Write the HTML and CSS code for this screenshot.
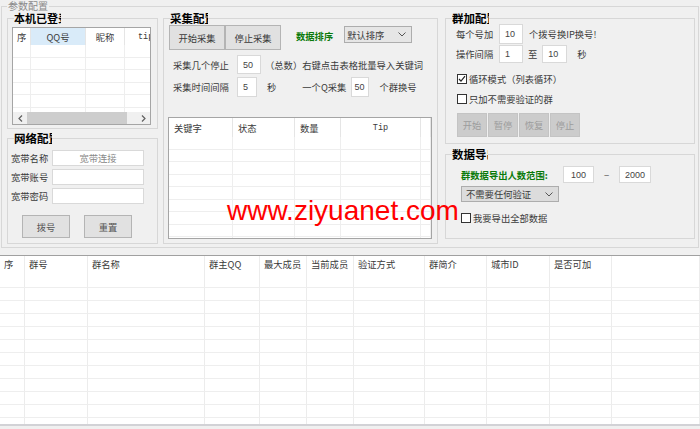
FILE: index.html
```html
<!DOCTYPE html>
<html lang="zh-CN">
<head>
<meta charset="utf-8">
<title>参数配置</title>
<link rel="stylesheet" href="styles.css">
</head>
<body>
<div class="outer">
  <div class="outer-title">参数配置</div>
  <div class="outer-body">
    <div class="col col1">
      <div class="group g1">
        <div class="gtitle w47">本机已登录</div>
        <div class="lv1">
          <div class="lv-body">
            <table class="lt lt1">
              <colgroup><col class="k18"><col class="k55"><col class="k39"><col class="k40"></colgroup>
              <thead><tr><th class="pl4">序</th><th class="hot ctr">QQ号</th><th class="ctr">昵称</th><th class="mono pl13">tip</th></tr></thead>
              <tbody>
                <tr><td></td><td></td><td></td><td></td></tr>
                <tr><td></td><td></td><td></td><td></td></tr>
                <tr><td></td><td></td><td></td><td></td></tr>
                <tr><td></td><td></td><td></td><td></td></tr>
                <tr><td></td><td></td><td></td><td></td></tr>
                <tr><td></td><td></td><td></td><td></td></tr>
              </tbody>
            </table>
          </div>
          <div class="scrollbar">
            <span class="sb-arrow"><svg width="5" height="7" viewBox="0 0 5 7"><polyline points="4,0.5 1,3.5 4,6.5" fill="none" stroke="#606060" stroke-width="1.2"/></svg></span>
            <span class="sb-thumb"></span>
            <span class="sb-track"></span>
            <span class="sb-arrow"><svg width="5" height="7" viewBox="0 0 5 7"><polyline points="1,0.5 4,3.5 1,6.5" fill="none" stroke="#606060" stroke-width="1.2"/></svg></span>
          </div>
        </div>
      </div>
      <div class="group g2">
        <div class="gtitle w38">网络配置</div>
        <div class="form2">
          <div class="frow"><span class="lbl2">宽带名称</span><input class="in in2 ctr grey" value="宽带连接"></div>
          <div class="frow"><span class="lbl2">宽带账号</span><input class="in in2" value=""></div>
          <div class="frow"><span class="lbl2">宽带密码</span><input class="in in2" value=""></div>
        </div>
        <div class="btnrow2"><button class="btn b48">拨号</button><button class="btn b48">重置</button></div>
      </div>
    </div>

    <div class="col col2">
      <div class="group g3">
        <div class="gtitle w38">采集配置</div>
        <div class="row3a">
          <button class="btn b56">开始采集</button><button class="btn b56">停止采集</button>
          <span class="green sort">数据排序</span>
          <div class="select s68"><span>默认排序</span><svg width="8" height="5" viewBox="0 0 8 5"><polyline points="0.5,0.5 4,4 7.5,0.5" fill="none" stroke="#555" stroke-width="1"/></svg></div>
        </div>
        <div class="row3b"><span class="lbl3">采集几个停止</span><input class="in n24 h19" value="50"><span class="ml4">（总数）右键点击表格批量导入关键词</span></div>
        <div class="row3c"><span class="lbl3">采集时间间隔</span><input class="in n20 h20" value="5"><span class="ml10">秒</span><span class="ml26">一个Q采集</span><input class="in n18 h20 ml5" value="50"><span class="ml10">个群换号</span></div>
        <div class="lv2">
          <table class="lt lt2">
            <colgroup><col class="k64"><col class="k62"><col class="k46"><col class="k80"><col class="k10"></colgroup>
            <thead><tr><th class="pl5">关键字</th><th class="pl5">状态</th><th class="pl5">数量</th><th class="mono ctr">Tip</th><th></th></tr></thead>
            <tbody>
              <tr><td></td><td></td><td></td><td></td><td></td></tr>
              <tr><td></td><td></td><td></td><td></td><td></td></tr>
              <tr><td></td><td></td><td></td><td></td><td></td></tr>
              <tr><td></td><td></td><td></td><td></td><td></td></tr>
              <tr><td></td><td></td><td></td><td></td><td></td></tr>
              <tr><td></td><td></td><td></td><td></td><td></td></tr>
              <tr><td></td><td></td><td></td><td></td><td></td></tr>
              <tr><td></td><td></td><td></td><td></td><td></td></tr>
              <tr><td></td><td></td><td></td><td></td><td></td></tr>
            </tbody>
          </table>
        </div>
      </div>
    </div>

    <div class="col col3">
      <div class="group g4">
        <div class="gtitle w37">群加配置</div>
        <div class="row4a"><span class="lbl4">每个号加</span><input class="in n24 h20" value="10"><span class="ml6">个拨号换IP换号!</span></div>
        <div class="row4b"><span class="lbl4">操作间隔</span><input class="in n24 h18" value="1"><span class="ml5">至</span><input class="in n25 h18 ml5" value="10"><span class="ml10">秒</span></div>
        <div class="cbrow cb1"><span class="cb"><svg width="8" height="8" viewBox="0 0 8 8"><polyline points="1,4 3,6.2 7,1.2" fill="none" stroke="#222" stroke-width="1.2"/></svg></span><span>循环模式（列表循环）</span></div>
        <div class="cbrow cb2"><span class="cb"></span><span>只加不需要验证的群</span></div>
        <div class="btnrow4"><button class="btn dis">开始</button><button class="btn dis">暂停</button><button class="btn dis">恢复</button><button class="btn dis">停止</button></div>
      </div>
      <div class="group g5">
        <div class="gtitle w36">数据导出</div>
        <div class="row5a"><span class="green lbl5">群数据导出人数范围:</span><input class="in n31 h17" value="100"><span class="dash">−</span><input class="in n32 h17" value="2000"></div>
        <div class="select s98"><span>不需要任何验证</span><svg width="8" height="5" viewBox="0 0 8 5"><polyline points="0.5,0.5 4,4 7.5,0.5" fill="none" stroke="#555" stroke-width="1"/></svg></div>
        <div class="cbrow cb3"><span class="cb"></span><span>我要导出全部数据</span></div>
      </div>
    </div>
  </div>
</div>

<div class="grid">
  <table class="big">
    <colgroup><col class="k25"><col class="k63"><col class="k117"><col class="k55"><col class="k47"><col class="k47"><col class="k71"><col class="k62"><col class="k63"><col class="k62"><col></colgroup>
    <thead><tr><th>序</th><th>群号</th><th>群名称</th><th>群主QQ</th><th>最大成员</th><th>当前成员</th><th>验证方式</th><th>群简介</th><th>城市ID</th><th>是否可加</th><th></th></tr></thead>
    <tbody>
      <tr><td></td><td></td><td></td><td></td><td></td><td></td><td></td><td></td><td></td><td></td><td></td></tr>
      <tr><td></td><td></td><td></td><td></td><td></td><td></td><td></td><td></td><td></td><td></td><td></td></tr>
      <tr><td></td><td></td><td></td><td></td><td></td><td></td><td></td><td></td><td></td><td></td><td></td></tr>
      <tr><td></td><td></td><td></td><td></td><td></td><td></td><td></td><td></td><td></td><td></td><td></td></tr>
      <tr><td></td><td></td><td></td><td></td><td></td><td></td><td></td><td></td><td></td><td></td><td></td></tr>
      <tr><td></td><td></td><td></td><td></td><td></td><td></td><td></td><td></td><td></td><td></td><td></td></tr>
      <tr><td></td><td></td><td></td><td></td><td></td><td></td><td></td><td></td><td></td><td></td><td></td></tr>
      <tr><td></td><td></td><td></td><td></td><td></td><td></td><td></td><td></td><td></td><td></td><td></td></tr>
      <tr><td></td><td></td><td></td><td></td><td></td><td></td><td></td><td></td><td></td><td></td><td></td></tr>
      <tr><td></td><td></td><td></td><td></td><td></td><td></td><td></td><td></td><td></td><td></td><td></td></tr>
      <tr><td></td><td></td><td></td><td></td><td></td><td></td><td></td><td></td><td></td><td></td><td></td></tr>
    </tbody>
  </table>
</div>

<div class="watermark">www.ziyuanet.com</div>
</body>
</html>
```

FILE: styles.css
```css
* { box-sizing: border-box; }
html, body { margin: 0; padding: 0; }
body {
  width: 700px; height: 429px; overflow: hidden; position: relative;
  background: #f0f0f0;
  font-family: "Noto Sans CJK SC", "Noto Sans", sans-serif;
  font-size: 9.3px; line-height: 12px; color: #3a3a3a;
}
input, button {
  font-family: "Noto Sans CJK SC", "Noto Sans", sans-serif;
  font-size: 9.3px; color: #3a3a3a; margin: 0; outline: none;
}

/* outer group */
.outer { margin: 6px 1px 0; height: 242px; border: 1px solid #d7d7d7; }
.outer-title {
  margin: -7px 0 0 5px; width: fit-content; height: 12px; line-height: 12px;
  padding: 0 1px; background: #f0f0f0; font-size: 10px; color: #8a8a8a;
}
.outer-body { display: flex; align-items: flex-start; padding: 6px 0 0 5px; }
.col { display: flex; flex-direction: column; }
.col1 { width: 151px; gap: 9px; }
.col2 { width: 275px; margin-left: 5px; }
.col3 { width: 250px; margin-left: 7px; gap: 10px; }

.group { border: 1px solid #d7d7d7; }
.g1 { height: 111px; }
.g2 { height: 106px; }
.g3 { height: 226px; }
.g4 { height: 126px; }
.g5 { height: 85px; }
.gtitle {
  margin: -7px 0 0 6px; height: 12px; line-height: 12px;
  font-size: 11.5px; font-weight: bold; color: #000; background: #f0f0f0;
  white-space: nowrap; overflow: hidden;
}
.w47 { width: 47px; font-size: 11px; } .w38 { width: 38px; }
.w37 { width: 37px; } .w36 { width: 36px; }

/* list views */
.lt { border-collapse: separate; border-spacing: 0; table-layout: fixed; }
.lt th { font-weight: normal; text-align: left; padding: 0; white-space: nowrap; overflow: hidden; color: #3a3a3a; }
.lt td { padding: 0; border-right: 1px solid #eeeeee; border-bottom: 1px solid #eeeeee; }
.lt th { border-right: 1px solid #e5e5e5; }
.ctr { text-align: center !important; }
.pl4 { padding-left: 4px !important; }
.pl5 { padding-left: 5px !important; }
.pl13 { padding-left: 13px !important; }
.mono { font-family: "Liberation Mono", monospace; font-size: 8.5px; }
.hot { background: #d9ebf9; }

.lv1 {
  margin: 3px 0 0 4px; width: 139px; height: 98px;
  border: 1px solid #a5a5a5; background: #fff;
  display: flex; flex-direction: column;
}
.lv-body { flex: 1; overflow: hidden; }
.lt1 { width: 152px; }
.lt1 thead tr { height: 17px; }
.lt1 tbody tr { height: 12.5px; }
.k18 { width: 18px; } .k55 { width: 55px; } .k39 { width: 39px; } .k40 { width: 40px; }

.scrollbar { height: 12px; display: flex; background: #f0f0f0; }
.sb-arrow { width: 14px; display: flex; align-items: center; justify-content: center; }
.sb-thumb { width: 100px; background: #cdcdcd; }
.sb-track { flex: 1; }

.lv2 {
  margin: 20px 0 0 4px; width: 264px; height: 122px;
  border: 1px solid #a5a5a5; background: #fff; overflow: hidden;
}
.lt2 { width: 262px; }
.lt2 thead tr { height: 19px; }
.lt2 tbody tr { height: 12.5px; }
.k64 { width: 64px; } .k62 { width: 62px; } .k46 { width: 46px; } .k80 { width: 80px; } .k10 { width: 10px; }

/* inputs / buttons */
.in {
  display: block; border: 1px solid #d9d9d9; background: #fff; padding: 0 0 0 5px;
  font-family: "Liberation Sans", sans-serif; font-size: 9px; color: #444;
}
.in2 { width: 92px; height: 16px; }
.in.ctr { text-align: center; padding: 0; }
.grey { color: #8a8a8a; font-family: "Noto Sans CJK SC", sans-serif; font-size: 9.3px; }
.n18 { width: 18px; padding-left: 2px; } .n20 { width: 20px; } .n24 { width: 24px; } .n25 { width: 25px; }
.n31 { width: 31px; padding-left: 7px; } .n32 { width: 32px; }
.h17 { height: 17px; } .h18 { height: 18px; } .h19 { height: 19px; } .h20 { height: 20px; }

.btn {
  border: 1px solid #b4b4b4; background: #e1e1e1; color: #3a3a3a; padding: 0;
}
.b48 { width: 48px; height: 23px; color: #555; }
.b56 { width: 56px; height: 25px; }
.btn.dis { width: 30px; height: 24px; background: #cccccc; border-color: #c4c4c4; color: #9c9c9c; }

.select {
  display: flex; align-items: center; justify-content: space-between;
  border: 1px solid #adadad; background: #e6e6e6; padding: 0 5px 0 2px; color: #3a3a3a;
}
.s68 { width: 68px; height: 17px; margin: 1px 0 0 11px; }
.s98 { width: 98px; height: 16px; margin: 3px 0 0 15px; background: #dcdcdc; padding-left: 4px; }

.green { color: #0a7a0a; font-weight: bold; }
.ml4 { margin-left: 4px; } .ml5 { margin-left: 5px; } .ml6 { margin-left: 6px; }
.ml10 { margin-left: 10px; } .ml26 { margin-left: 26px; }

/* group 2 */
.form2 { margin-top: 6px; display: flex; flex-direction: column; gap: 3px; }
.frow { display: flex; align-items: center; padding-left: 3px; }
.lbl2 { width: 41px; }
.btnrow2 { margin-top: 11px; padding-left: 14px; display: flex; gap: 14px; }

/* group 3 */
.row3a { margin-top: 1px; padding-left: 5px; display: flex; align-items: flex-start; }
.sort { margin: 3px 0 0 15px; line-height: 17px; }
.row3b { margin-top: 5px; padding-left: 9px; display: flex; align-items: center; }
.row3c { margin-top: 3px; padding-left: 9px; display: flex; align-items: center; }
.lbl3 { width: 64px; }

/* group 4 */
.row4a { padding-left: 10px; display: flex; align-items: center; }
.row4b { margin-top: 1px; padding-left: 10px; display: flex; align-items: center; }
.lbl4 { width: 43px; }
.cbrow { display: flex; align-items: center; height: 10px; padding-left: 11px; }
.cb {
  width: 10px; height: 10px; border: 1px solid #333; background: #fff; margin-right: 2px;
  display: flex; align-items: center; justify-content: center;
}
.cb1 { margin-top: 11px; }
.cb2 { margin-top: 10px; }
.btnrow4 { margin-top: 9px; padding-left: 11px; display: flex; gap: 1px; }

/* group 5 */
.row5a { margin-top: 6px; padding-left: 15px; display: flex; align-items: center; }
.lbl5 { width: 102px; }
.dash { width: 25px; text-align: center; color: #555; }
.cb3 { margin-top: 11px; padding-left: 15px; }

/* big grid */
.grid {
  margin-top: 7px; height: 171px; overflow: hidden; background: #fff;
  border-top: 1px solid #a0a0a0; border-bottom: 2px solid #d2d2d6;
}
.big { width: 700px; border-collapse: separate; border-spacing: 0; table-layout: fixed; }
.big th {
  height: 32px; padding: 2px 0 0 4px; vertical-align: top; text-align: left;
  font-weight: normal; color: #3a3a3a; white-space: nowrap; overflow: hidden;
  border-right: 1px solid #ececec; border-bottom: 1px solid #eeeeee; line-height: 12px;
}
.big td { height: 13px; padding: 0; border-right: 1px solid #ececec; border-bottom: 1px solid #eeeeee; }
.k25 { width: 25px; } .k63 { width: 63px; } .k117 { width: 117px; } .k47 { width: 47px; }
.k71 { width: 71px; }

/* watermark overlay */
.watermark {
  position: absolute; left: 227px; top: 195px;
  font-family: "Liberation Sans", Arial, sans-serif; font-size: 28px; line-height: 32px;
  color: #ff0000; white-space: nowrap;
}
```
